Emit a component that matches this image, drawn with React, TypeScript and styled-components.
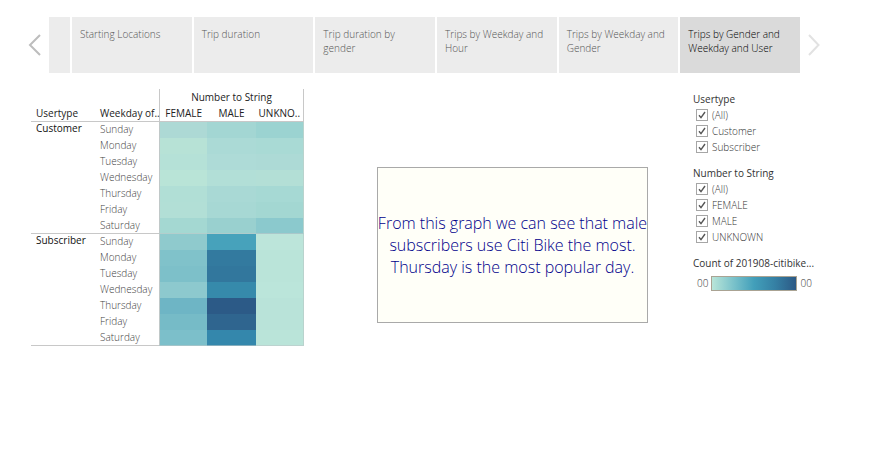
import React, { useState } from "react";
import styled, { createGlobalStyle } from "styled-components";

const GlobalStyle = createGlobalStyle`
  *, *::before, *::after { box-sizing: border-box; }
  body {
    margin: 0;
    background: #fff;
    color: #333;
    font-family: "Open Sans", "Noto Sans", sans-serif;
    font-size: 10px;
    line-height: 16px;
  }
`;

const Page = styled.main`
  padding: 17px 67px 24px 28px;
`;

const StoryNav = styled.nav`
  display: flex;
  align-items: center;
`;

const ArrowButton = styled.button<{ $side: "left" | "right" }>`
  flex: none;
  width: ${(p) => (p.$side === "left" ? 21 : 20)}px;
  height: 56px;
  padding: ${(p) => (p.$side === "left" ? "0" : "0 0 0 8px")};
  border: 0;
  background: none;
  color: ${(p) => (p.$side === "left" ? "#bdbdbd" : "#e2e2e2")};
  display: flex;
  align-items: center;
  cursor: pointer;
`;

const Strip = styled.div`
  flex: 1;
  min-width: 0;
  display: flex;
  gap: 2px;
  overflow: hidden;
`;

const StoryPoint = styled.button<{ $active?: boolean }>`
  flex: 1 1 0;
  min-width: 0;
  height: 56px;
  padding: 10px 8px;
  border: 0;
  background: ${(p) => (p.$active ? "#dadada" : "#ececec")};
  color: ${(p) => (p.$active ? "#000" : "#555")};
  font: inherit;
  font-weight: 300;
  line-height: 14px;
  text-align: left;
  display: flex;
  align-items: flex-start;
  cursor: pointer;
`;

const ClippedPoint = styled(StoryPoint)`
  flex: none;
  width: 21px;
`;

const Dashboard = styled.section`
  display: grid;
  grid-template-columns: minmax(0, 346fr) minmax(0, 271fr) minmax(0, 172fr);
  align-items: start;
  padding: 16px 0 0 3px;
`;

const ChartArea = styled.div`
  padding-right: 73px;
`;

const HeatTable = styled.table`
  width: 100%;
  table-layout: fixed;
  border-collapse: separate;
  border-spacing: 0;
`;

const LabelCol = styled.col`
  width: 64px;
`;

const GroupHead = styled.th`
  height: 16px;
  padding: 0;
  border-left: 1px solid #c8c8c8;
  border-right: 1px solid #c8c8c8;
  font-weight: 400;
  color: #222;
`;

const FieldHead = styled.th`
  height: 17px;
  padding: 0 0 0 5px;
  border-bottom: 1px solid #c8c8c8;
  font-weight: 400;
  color: #222;
  text-align: left;
  vertical-align: bottom;
  white-space: nowrap;
`;

const GenderHead = styled.th<{ $edge?: "left" | "right" }>`
  height: 17px;
  padding: 0;
  border-bottom: 1px solid #c8c8c8;
  border-left: ${(p) => (p.$edge === "left" ? "1px solid #c8c8c8" : "0")};
  border-right: ${(p) => (p.$edge === "right" ? "1px solid #c8c8c8" : "0")};
  font-weight: 400;
  color: #222;
  text-align: center;
  white-space: nowrap;
`;

const UserHead = styled.th`
  padding: 0 0 0 5px;
  border-bottom: 1px solid #c8c8c8;
  font-weight: 400;
  color: #111;
  line-height: 13px;
  text-align: left;
  vertical-align: top;
`;

const DayHead = styled.th<{ $last: boolean }>`
  height: 16px;
  padding: 0 0 0 5px;
  border-bottom: ${(p) => (p.$last ? "1px solid #c8c8c8" : "0")};
  font-weight: 300;
  color: #444;
  line-height: 15px;
  text-align: left;
  vertical-align: top;
`;

const HeatCell = styled.td<{ $fill: string; $last: boolean; $edge?: "left" | "right" }>`
  height: 16px;
  padding: 0;
  background: ${(p) => p.$fill};
  border-bottom: ${(p) => (p.$last ? "1px solid rgba(190, 200, 200, 0.6)" : "0")};
  border-left: ${(p) => (p.$edge === "left" ? "1px solid #c0c8c8" : "0")};
  border-right: ${(p) => (p.$edge === "right" ? "1px solid #b9d3cd" : "0")};
`;

const Note = styled.p`
  margin: 78px 0 0;
  min-height: 156px;
  border: 1px solid #a9a9a9;
  background: #fffff8;
  color: #00008b;
  font-size: 16px;
  font-weight: 300;
  line-height: 22px;
  text-align: center;
  display: flex;
  flex-direction: column;
  align-items: center;
  justify-content: center;
`;

const NoteLine = styled.span`
  white-space: nowrap;
`;

const Filters = styled.aside`
  padding: 2px 0 0 45px;
`;

const FilterGroup = styled.fieldset`
  min-width: 0;
  margin: 0 0 10px;
  padding: 0;
  border: 0;
`;

const FilterTitle = styled.legend`
  padding: 0;
  color: #333;
  white-space: nowrap;
`;

const Option = styled.label`
  display: flex;
  align-items: center;
  gap: 4px;
  height: 16px;
  padding-left: 3px;
  color: #333;
  font-weight: 300;
`;

const BoxWrap = styled.span`
  position: relative;
  display: block;
  width: 12px;
  height: 12px;
`;

const Box = styled.input`
  appearance: none;
  display: block;
  width: 12px;
  height: 12px;
  margin: 0;
  border: 1px solid #a6a6a6;
  background: #fff;
  & + svg { visibility: hidden; }
  &:checked + svg { visibility: visible; }
`;

const Tick = styled.svg`
  position: absolute;
  inset: 0;
  pointer-events: none;
`;

const ScaleRow = styled.div`
  display: flex;
  align-items: center;
  gap: 3px;
  padding: 4px 0 0 4px;
  color: #333;
  font-weight: 300;
`;

const ScaleBar = styled.div`
  flex: 0 1 86px;
  height: 15px;
  border: 1px solid #aaa393;
  background: linear-gradient(to right, #b9e5d8, #7cc3cb 25%, #429fba 50%, #3580a4 75%, #2c5985);
`;

const storyPoints = [
  "Starting Locations",
  "Trip duration",
  "Trip duration by gender",
  "Trips by Weekday and Hour",
  "Trips by Weekday and Gender",
  "Trips by Gender and Weekday and User",
];

const days = ["Sunday", "Monday", "Tuesday", "Wednesday", "Thursday", "Friday", "Saturday"];

const groups = [
  {
    name: "Customer",
    fills: [
      ["#add9d5", "#a3d6d3", "#9bd3d1"],
      ["#b7e2d6", "#abdad6", "#a9dad5"],
      ["#b5e1d7", "#aedbd7", "#addad6"],
      ["#b9e4d7", "#b2dfd7", "#b3dfd6"],
      ["#b1dfd6", "#a9d9d5", "#a6d9d4"],
      ["#b2dfd6", "#a7d8d4", "#a3d7d2"],
      ["#a4d8d2", "#99d0cf", "#8bc9cd"],
    ],
  },
  {
    name: "Subscriber",
    fills: [
      ["#8fcacd", "#47a2bb", "#bce5da"],
      ["#80c2ca", "#337a9f", "#bae4d9"],
      ["#7dc0c9", "#32779d", "#bae4d9"],
      ["#8dc9ce", "#368aab", "#bbe5da"],
      ["#6eb5c5", "#2c5a87", "#b9e3d9"],
      ["#76bbc7", "#2f658f", "#b9e3d9"],
      ["#7cbfca", "#3487ac", "#bae4d9"],
    ],
  },
];

const filters = [
  { title: "Usertype", options: ["(All)", "Customer", "Subscriber"] },
  { title: "Number to String", options: ["(All)", "FEMALE", "MALE", "UNKNOWN"] },
];

const edgeOf = (i: number) => (i === 0 ? "left" : i === 2 ? "right" : undefined);

function StoryBar() {
  const [active, setActive] = useState(5);
  return (
    <StoryNav aria-label="Story points">
      <ArrowButton $side="left" aria-label="Previous" onClick={() => setActive(Math.max(0, active - 1))}>
        <svg width="13" height="22" viewBox="0 0 13 22" fill="none" stroke="currentColor" strokeWidth="2">
          <path d="M12 1 2 11l10 10" />
        </svg>
      </ArrowButton>
      <Strip>
        <ClippedPoint aria-label="Earlier story point" />
        {storyPoints.map((label, i) => (
          <StoryPoint key={label} $active={i === active} onClick={() => setActive(i)}>
            {label}
          </StoryPoint>
        ))}
      </Strip>
      <ArrowButton $side="right" aria-label="Next" onClick={() => setActive(Math.min(5, active + 1))}>
        <svg width="12" height="22" viewBox="0 0 12 22" fill="none" stroke="currentColor" strokeWidth="2">
          <path d="M1 1l9.500 10L1 21" />
        </svg>
      </ArrowButton>
    </StoryNav>
  );
}

function HeatMap() {
  return (
    <HeatTable>
      <colgroup>
        <LabelCol />
        <LabelCol />
        <col span={3} />
      </colgroup>
      <thead>
        <tr>
          <td colSpan={2} />
          <GroupHead colSpan={3}>Number to String</GroupHead>
        </tr>
        <tr>
          <FieldHead>Usertype</FieldHead>
          <FieldHead>Weekday of..</FieldHead>
          {["FEMALE", "MALE", "UNKNO.."].map((g, i) => (
            <GenderHead key={g} $edge={edgeOf(i)}>{g}</GenderHead>
          ))}
        </tr>
      </thead>
      {groups.map((group) => (
        <tbody key={group.name}>
          {days.map((day, r) => (
            <tr key={day}>
              {r === 0 && <UserHead rowSpan={7} scope="rowgroup">{group.name}</UserHead>}
              <DayHead $last={r === 6} scope="row">{day}</DayHead>
              {group.fills[r].map((fill, i) => (
                <HeatCell key={i} $fill={fill} $last={r === 6} $edge={edgeOf(i)} />
              ))}
            </tr>
          ))}
        </tbody>
      ))}
    </HeatTable>
  );
}

function CheckOption({ label }: { label: string }) {
  return (
    <Option>
      <BoxWrap>
        <Box type="checkbox" defaultChecked />
        <Tick width="12" height="12" viewBox="0 0 12 12" fill="none" stroke="#555" strokeWidth="1.4">
          <path d="M3 6.200 5 8.700 9 3" />
        </Tick>
      </BoxWrap>
      {label}
    </Option>
  );
}

export default function App() {
  return (
    <>
      <GlobalStyle />
      <Page>
        <StoryBar />
        <Dashboard>
          <ChartArea>
            <HeatMap />
          </ChartArea>
          <Note>
            <NoteLine>From this graph we can see that male</NoteLine>
            <NoteLine>subscribers use Citi Bike the most.</NoteLine>
            <NoteLine>Thursday is the most popular day.</NoteLine>
          </Note>
          <Filters>
            {filters.map((f) => (
              <FilterGroup key={f.title}>
                <FilterTitle>{f.title}</FilterTitle>
                {f.options.map((o) => (
                  <CheckOption key={o} label={o} />
                ))}
              </FilterGroup>
            ))}
            <FilterTitle as="div">Count of 201908-citibike...</FilterTitle>
            <ScaleRow>
              <span>00</span>
              <ScaleBar />
              <span>00</span>
            </ScaleRow>
          </Filters>
        </Dashboard>
      </Page>
    </>
  );
}
